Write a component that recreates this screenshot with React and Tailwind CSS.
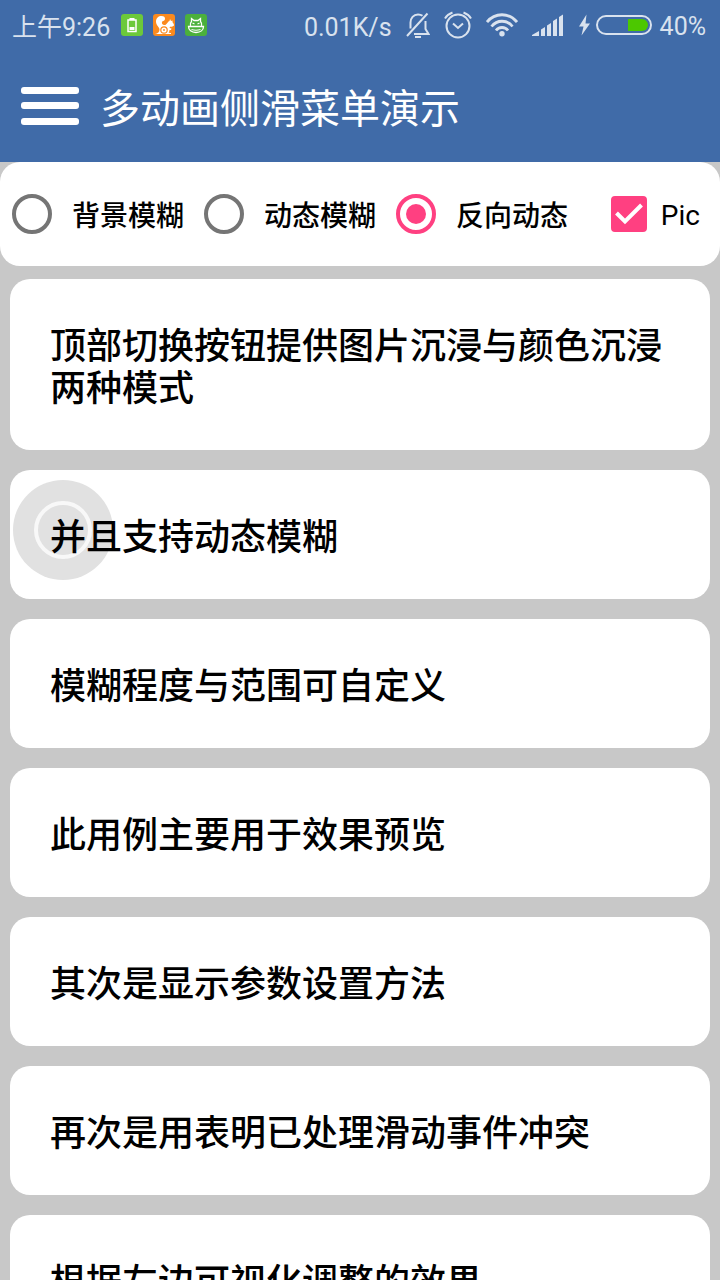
import React, { useState } from 'react'

const MODES = ['背景模糊', '动态模糊', '反向动态']

const ITEMS = [
  '顶部切换按钮提供图片沉浸与颜色沉浸两种模式',
  '并且支持动态模糊',
  '模糊程度与范围可自定义',
  '此用例主要用于效果预览',
  '其次是显示参数设置方法',
  '再次是用表明已处理滑动事件冲突',
  '根据左边可视化调整的效果',
]

function BatteryAppIcon() {
  return (
    <svg className="size-6" viewBox="0 0 24 24" aria-hidden="true">
      <rect x="1" y="1" width="22" height="22" rx="3" fill="#6cc93a" />
      <path d="M8 7h8v11.500H8z" fill="none" stroke="#fff" strokeWidth="1.500" />
      <path d="M9.500 5h5v2h-5zM9.500 14h5v3h-5z" fill="#fff" />
    </svg>
  )
}

function SquirrelAppIcon() {
  return (
    <svg className="size-6" viewBox="0 0 24 24" aria-hidden="true">
      <rect x="1" y="1" width="22" height="22" rx="3" fill="#fb8a1e" />
      <path
        d="M3 21c3-.5 4.500-2 4.500-4.500C7.500 14 4 12.500 4 8.500c0-3.500 2.500-5.500 5.500-5.500 2.300 0 3.800 1.300 3.500 3-.2 1.500-1.600 2-2.800 2.500C9.500 10 10 11.500 12 12c1.500.3 2.700-1 3.500-2.300.6-1 1.300-1.500 2-1.700L18 6l1 2 1.500-.5v1.800c.8.9 1.500 2 1.500 3.200-1.200 1.200-2.500 1.300-4 1.200l-.5 1.300 2 .5-.5 1.500h-1.500c0 1.200-.3 2-.9 2.800l2.400.2v1z"
        fill="#fff"
      />
      <circle cx="12" cy="17" r="3.200" fill="none" stroke="#fb8a1e" strokeWidth="1.200" />
      <circle cx="12" cy="17" r=".9" fill="#fb8a1e" />
    </svg>
  )
}

function CatAppIcon() {
  return (
    <svg className="size-6" viewBox="0 0 24 24" fill="none" stroke="#fff" aria-hidden="true">
      <rect x="1" y="1" width="22" height="22" rx="3" fill="#4bb03c" stroke="none" />
      <path d="M6.500 13c-.5-2 0-3.500 1-4.500V5.500l2.500 2h4l2.500-2v3c1 1 1.500 2.500 1 4.500" strokeWidth="1.300" />
      <path d="M4.500 13.500h15c0 3.500-3 6-7.500 6s-7.500-2.500-7.500-6z" strokeWidth="1.300" />
      <path d="M8.500 10l2 1M15.500 10l-2 1M7.500 16.500c3 1 6 1 9 0" strokeWidth="1.200" />
    </svg>
  )
}

function MutedBellIcon() {
  return (
    <svg className="h-7 w-6" viewBox="0 0 24 28" fill="none" stroke="currentColor" strokeWidth="2" aria-hidden="true">
      <path d="M1 25L21.500 2.500M4.500 17.500V11.500c0-4.500 3-8 7.500-8 2 0 3.500.5 4.500 1.300M19.500 10v8l3 5H8" />
      <path d="M9 26h6" strokeWidth="2" />
    </svg>
  )
}

function AlarmIcon() {
  return (
    <svg className="size-7" viewBox="0 0 28 28" fill="none" stroke="currentColor" strokeWidth="2" aria-hidden="true">
      <circle cx="14" cy="15" r="11.500" />
      <path d="M9 12.500l5 4.500 5-4.500M1 7.500C2.500 5 5 2.800 8.500 1.500M27 7.500C25.500 5 23 2.800 19.500 1.500" />
    </svg>
  )
}

function WifiIcon() {
  return (
    <svg className="h-6 w-8" viewBox="0 0 32 24" fill="none" stroke="currentColor" strokeWidth="2.800" aria-hidden="true">
      <path d="M1 9C9 -.700 23 -.700 31 9M5.500 13.500c5.500-7 15.500-7 21 0M10 17.500c3-4 9-4 12 0" />
      <circle cx="16" cy="20.800" r="2.700" fill="currentColor" stroke="none" />
    </svg>
  )
}

function SignalIcon() {
  return (
    <svg className="h-6 w-8" viewBox="0 0 32 24" fill="currentColor" aria-hidden="true">
      <path d="M0 23v-1l7-4v5zM9 16.500l4-2.500v9H9zM15 12.500l4-2.500v13h-4zM21 8l4-2.500V23h-4zM27 4l4-2.500V23h-4z" />
    </svg>
  )
}

function ChargingBattery() {
  return (
    <svg className="h-6 w-[74px]" viewBox="0 0 74 24" aria-hidden="true">
      <path d="M8.500 1.500L1 13.500h4.500L3.500 22.500l8.500-12H7.500z" fill="currentColor" />
      <rect x="19" y="3" width="54" height="18" rx="9" fill="none" stroke="currentColor" strokeWidth="2" />
      <path d="M50 6h14a6 6 0 0 1 0 12H50z" fill="#4cc800" />
    </svg>
  )
}

function StatusBar() {
  return (
    <div className="flex h-[50px] items-center justify-between pr-3.5 pl-3 text-[25px] leading-8 text-[#d9e2ee]">
      <div className="flex items-center gap-2.5">
        <span className="pt-1.5">上午9:26</span>
        <div className="flex gap-2">
          <BatteryAppIcon />
          <SquirrelAppIcon />
          <CatAppIcon />
        </div>
      </div>
      <div className="flex items-center gap-3.5">
        <span className="pt-1.5">0.01K/s</span>
        <MutedBellIcon />
        <AlarmIcon />
        <WifiIcon />
        <SignalIcon />
        <div className="flex items-center gap-2">
          <ChargingBattery />
          <span className="pt-1">40%</span>
        </div>
      </div>
    </div>
  )
}

export default function App() {
  const [mode, setMode] = useState('反向动态')
  const [pic, setPic] = useState(true)

  return (
    <div className="flex h-screen flex-col overflow-hidden bg-[#c8c8c8] font-[Roboto,'Noto_Sans_CJK_SC',sans-serif] text-black">
      <header className="shrink-0 bg-[#406ba8]">
        <StatusBar />
        <div className="flex h-28 items-center gap-5 px-5">
          <button type="button" aria-label="菜单">
            <svg className="h-10 w-15" viewBox="0 0 60 40" fill="#fff" aria-hidden="true">
              <rect x="1" y="1" width="58" height="7" rx="3" />
              <rect x="1" y="16" width="58" height="7" rx="3" />
              <rect x="1" y="32" width="58" height="7" rx="3" />
            </svg>
          </button>
          <h1 className="pt-2 text-[40px] leading-12 text-white">多动画侧滑菜单演示</h1>
        </div>
      </header>

      <form className="flex h-[104px] shrink-0 items-center justify-between rounded-[20px] bg-white pr-5 pl-3 text-[28px] leading-8">
        <div className="flex gap-5">
          {MODES.map((name) => (
            <label key={name} className="flex items-center gap-5">
              <input
                type="radio"
                name="mode"
                checked={mode === name}
                onChange={() => setMode(name)}
                className="grid size-10 appearance-none place-items-center rounded-full border-4 border-[#757575] before:size-5 before:rounded-full checked:border-[#ff4081] checked:before:bg-[#ff4081]"
              />
              <span className="pt-1.5 font-medium">{name}</span>
            </label>
          ))}
        </div>
        <label className="flex items-center gap-3.5">
          <span className="grid size-9">
            <input
              type="checkbox"
              checked={pic}
              onChange={(e) => setPic(e.target.checked)}
              className="peer col-start-1 row-start-1 size-9 appearance-none rounded-sm border-4 border-[#757575] checked:border-[#ff4081] checked:bg-[#ff4081]"
            />
            <svg
              className="pointer-events-none invisible col-start-1 row-start-1 size-9 peer-checked:visible"
              viewBox="0 0 36 36"
              fill="none"
              stroke="#fff"
              strokeWidth="4"
              aria-hidden="true"
            >
              <path d="M5.500 17l8.500 8.500L30.500 9" />
            </svg>
          </span>
          <span className="pt-1">Pic</span>
        </label>
      </form>

      <main className="min-h-0 flex-1 overflow-y-auto px-2.5 pt-[13px] [scrollbar-width:none]">
        <ul className="flex flex-col gap-5">
          {ITEMS.map((text, i) => (
            <li
              key={text}
              className="relative rounded-[20px] bg-white px-10 pt-[47px] pb-10 text-[36px] leading-[42px] font-medium"
            >
              {i === 1 && (
                <span className="absolute top-2.5 left-[3px] grid size-[100px] place-items-center rounded-full bg-[#e1e1e1]">
                  <span className="size-[58px] rounded-full border-4 border-[#f8f8f8]" />
                </span>
              )}
              <span className="relative">{text}</span>
            </li>
          ))}
        </ul>
      </main>
    </div>
  )
}
